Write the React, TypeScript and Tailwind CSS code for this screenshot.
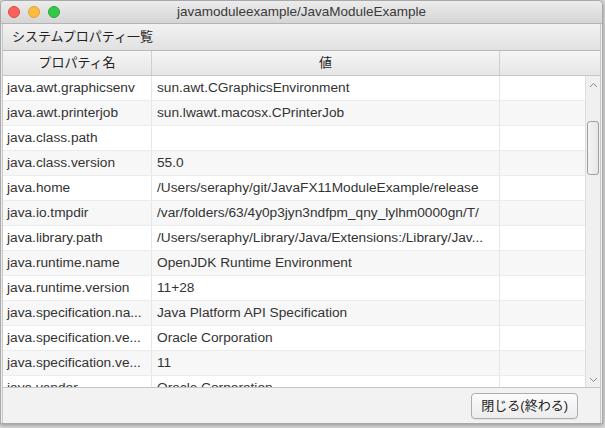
import React from 'react';

const rows: [string, string][] = [
    ['java.awt.graphicsenv', 'sun.awt.CGraphicsEnvironment'],
    ['java.awt.printerjob', 'sun.lwawt.macosx.CPrinterJob'],
    ['java.class.path', ''],
    ['java.class.version', '55.0'],
    ['java.home', '/Users/seraphy/git/JavaFX11ModuleExample/release'],
    ['java.io.tmpdir', '/var/folders/63/4y0p3jyn3ndfpm_qny_lylhm0000gn/T/'],
    ['java.library.path', '/Users/seraphy/Library/Java/Extensions:/Library/Jav...'],
    ['java.runtime.name', 'OpenJDK Runtime Environment'],
    ['java.runtime.version', '11+28'],
    ['java.specification.na...', 'Java Platform API Specification'],
    ['java.specification.ve...', 'Oracle Corporation'],
    ['java.specification.ve...', '11'],
    ['java.vendor', 'Oracle Corporation'],
];

export default function App() {
    return (
        <div
            className="w-[605px] h-[428px] bg-[#d9d9d9] overflow-hidden text-[#333]"
            style={{ fontFamily: '"Liberation Sans", "Noto Sans CJK JP", sans-serif' }}
        >
            <div className="w-[603px] h-[424px] flex flex-col bg-[#ececec] rounded-t-[5px] overflow-hidden border border-[#a9a9a9] shadow-[0_1px_4px_rgba(0,0,0,0.35)]">
                {/* Title bar */}
                <div className="h-[23px] shrink-0 relative flex items-center justify-center bg-gradient-to-b from-[#ececec] to-[#d5d5d5] border-b border-[#b3b3b3]">
                    <div className="absolute left-[7px] top-[5px] flex gap-[8px]">
                        <span className="w-[12px] h-[12px] rounded-full bg-[#fc605c] border border-[#de4a46]" />
                        <span className="w-[12px] h-[12px] rounded-full bg-[#fdbc40] border border-[#dea236]" />
                        <span className="w-[12px] h-[12px] rounded-full bg-[#34c84a] border border-[#27aa35]" />
                    </div>
                    <span className="text-[13.5px] text-[#3a3a3a]">javamoduleexample/JavaModuleExample</span>
                </div>

                <div className="flex-1 flex flex-col mx-[1px] border-x border-[#c8c8c8] min-h-0">
                    {/* Section header */}
                    <div className="h-[27px] shrink-0 flex items-center pl-[9px] bg-gradient-to-b from-[#f2f2f2] to-[#e1e1e1] border-b border-[#b9b9b9] text-[13px] text-[#222]">
                        システムプロパティ一覧
                    </div>

                    {/* Table header */}
                    <div className="h-[25px] shrink-0 flex bg-gradient-to-b from-[#f5f5f5] to-[#e6e6e6] border-b border-[#c6c6c6] text-[13px] text-[#222]">
                        <div className="w-[149px] flex items-center justify-center border-r border-[#cfcfcf]">プロパティ名</div>
                        <div className="w-[348px] flex items-center justify-center border-r border-[#cfcfcf]">値</div>
                        <div className="flex-1" />
                    </div>

                    {/* Body */}
                    <div className="flex-1 flex min-h-0 border-b border-[#c4c4c4]">
                        <div className="flex-1 overflow-hidden">
                            {rows.map(([k, v], i) => (
                                <div
                                    key={i}
                                    className={`h-[25px] flex text-[13.7px] border-b border-[#ececec] ${i % 2 === 0 ? 'bg-white' : 'bg-[#f7f7f7]'}`}
                                >
                                    <div className="w-[149px] shrink-0 flex items-center pl-[4px] border-r border-[#e6e6e6] whitespace-nowrap overflow-hidden">{k}</div>
                                    <div className="w-[348px] shrink-0 flex items-center pl-[5px] border-r border-[#e6e6e6] whitespace-nowrap overflow-hidden">{v}</div>
                                    <div className="flex-1" />
                                </div>
                            ))}
                        </div>
                        {/* Scrollbar */}
                        <div className="w-[15px] shrink-0 flex flex-col items-center bg-[#f0f0f0] border-l border-[#dedede]">
                            <svg width="9" height="6" viewBox="0 0 9 6" className="mt-[6px]">
                                <path d="M1 5 L4.5 1.5 L8 5" fill="none" stroke="#8a8a8a" strokeWidth="1" />
                            </svg>
                            <div className="mt-[33px] w-[12px] h-[54px] rounded-[3px] border border-[#9f9f9f] bg-gradient-to-r from-[#f4f4f4] to-[#e6e6e6]" />
                            <div className="flex-1" />
                            <svg width="9" height="6" viewBox="0 0 9 6" className="mb-[4px]">
                                <path d="M1 1 L4.5 4.5 L8 1" fill="none" stroke="#8a8a8a" strokeWidth="1" />
                            </svg>
                        </div>
                    </div>

                    {/* Footer */}
                    <div className="h-[35px] shrink-0 flex items-center justify-end pr-[22px] bg-[#f2f2f2]">
                        <button className="h-[26px] px-[9px] rounded-[4px] border border-[#acacac] bg-gradient-to-b from-[#fbfbfb] to-[#ececec] text-[13px] text-[#222] shadow-[0_1px_0_rgba(0,0,0,0.05)]">
                            閉じる(終わる)
                        </button>
                    </div>
                </div>
            </div>
        </div>
    );
}
